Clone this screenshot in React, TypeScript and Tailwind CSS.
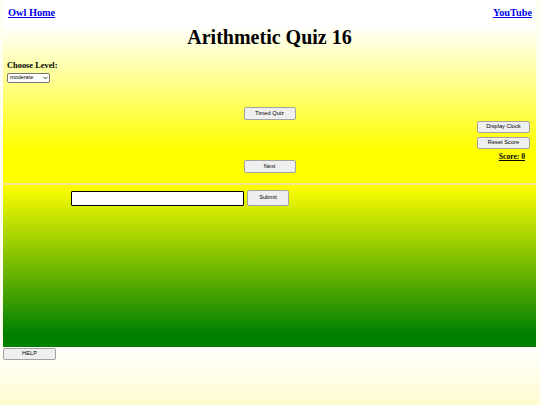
export default function App() {
  const btn =
    "flex items-center justify-center bg-[#efefef] border border-[#a3a3a3] rounded-[2px] text-[5.7px] leading-none text-black font-['Liberation_Sans',Arial,sans-serif]";
  return (
    <div className="min-h-[405px] flex flex-col bg-[#fffff0] font-['Liberation_Sans',Arial,sans-serif]">
      <div className="ml-[3px] mr-[4px] h-[183px] bg-[linear-gradient(to_bottom,#ffffff_14%,#ffff00_82%)] flex flex-col">
        <div className="flex justify-between pl-[5px] pr-[4px] pt-[7px] text-[10.3px] leading-[12px] font-bold font-['Liberation_Serif','Times_New_Roman',serif]">
          <a className="text-[#0000ee] underline" href="#">
            Owl Home
          </a>
          <a className="text-[#0000ee] underline" href="#">
            YouTube
          </a>
        </div>
        <h1 className="mt-[5.5px] text-center text-[20px] leading-[24px] font-bold text-black font-['Liberation_Serif','Times_New_Roman',serif]">
          Arithmetic Quiz 16
        </h1>
        <div className="mt-[12px] pl-[4px]">
          <div className="text-[8.4px] leading-[10px] font-bold text-black font-['Liberation_Serif','Times_New_Roman',serif]">
            Choose Level:
          </div>
          <div className="mt-[2px] w-[43px] h-[10px] flex items-center justify-between bg-white border border-[#767676] rounded-[2px] pl-[2px] pr-[1.5px] text-[5.5px] leading-none text-black">
            <span>moderate</span>
            <svg width="5" height="4" viewBox="0 0 5 4" className="block">
              <path d="M0.6 0.9 L2.5 2.9 L4.4 0.9" fill="none" stroke="#222" strokeWidth="0.9" />
            </svg>
          </div>
        </div>
        <div className="grid grid-cols-[1fr_auto_1fr]">
          <div />
          <div className="flex flex-col">
            <button className={`${btn} mt-[24.6px] w-[52px] h-[13px]`}>Timed Quiz</button>
            <button className={`${btn} mt-[40px] w-[52px] h-[13px]`}>Next</button>
          </div>
          <div className="flex flex-col items-end pr-[6px]">
            <button className={`${btn} mt-[38px] w-[53px] h-[12px]`}>Display Clock</button>
            <button className={`${btn} mt-[4.6px] w-[53px] h-[12.4px]`}>Reset Score</button>
            <div className="mr-[5px] mt-[2.3px] text-[7.6px] leading-[9px] font-bold underline text-black font-['Liberation_Serif','Times_New_Roman',serif]">
              Score: 0
            </div>
          </div>
        </div>
      </div>
      <div className="ml-[3px] mr-[4px] h-[2px] bg-[#f0e68c]" />
      <div className="ml-[3px] mr-[4px] h-[162px] bg-[linear-gradient(to_bottom,#ffff00,#008000_92%)] flex items-start gap-[3px] pl-[68px] pt-[5px]">
        <input
          type="text"
          className="mt-[0.7px] w-[173px] h-[15px] p-0 border-[1.5px] border-black rounded-[1px] bg-white outline-none"
        />
        <button className={`${btn} w-[42px] h-[16px]`}>Submit</button>
      </div>
      <div className="flex-1 h-[58px] pl-[3px] bg-[linear-gradient(to_bottom,#ffffff,#fffbcf)]">
        <button className={`${btn} mt-[0.7px] w-[53px] h-[12px]`}>HELP</button>
      </div>
    </div>
  );
}
